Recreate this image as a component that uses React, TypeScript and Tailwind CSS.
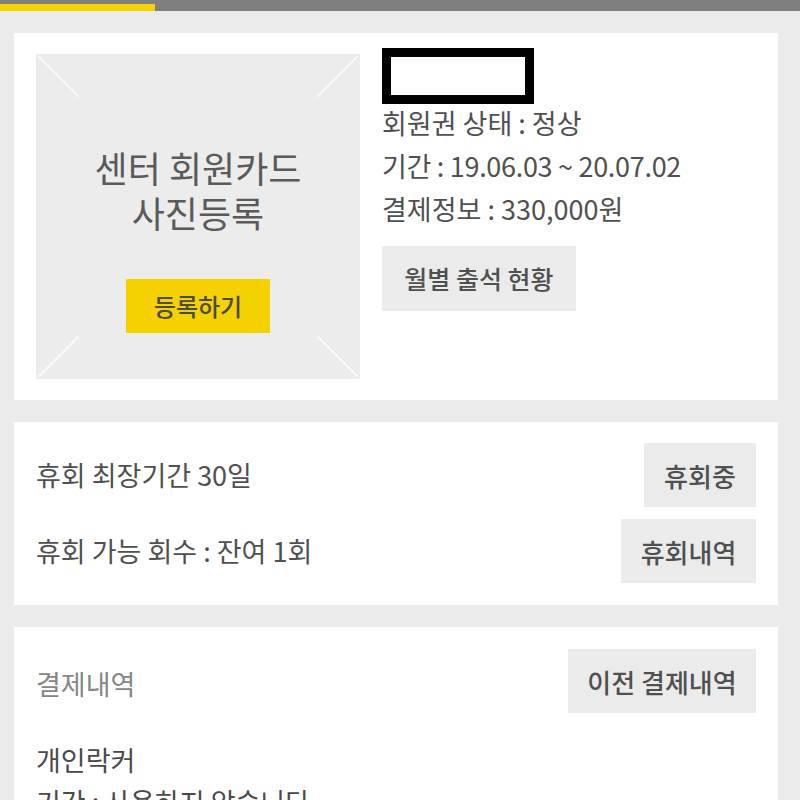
import React from 'react';

const GrayButton: React.FC<{ label: string; className?: string }> = ({ label, className = '' }) => (
  <button
    className={`h-[64px] bg-[#ebebeb] text-[#505050] text-[26px] font-medium flex items-center justify-center ${className}`}
  >
    {label}
  </button>
);

const PhotoPlaceholder: React.FC = () => (
  <div className="relative mt-[6px] w-[324px] h-[325px] bg-[#ececec] shrink-0 flex flex-col items-center">
    <svg className="absolute inset-0" width="324" height="325" viewBox="0 0 324 325">
      <g stroke="#ffffff" strokeWidth="2" strokeLinecap="round" opacity="0.8">
        <line x1="3" y1="3" x2="42" y2="42" />
        <line x1="321" y1="3" x2="282" y2="42" />
        <line x1="3" y1="322" x2="42" y2="283" />
        <line x1="321" y1="322" x2="282" y2="283" />
      </g>
    </svg>
    <div className="relative mt-[91px] text-center text-[36px] leading-[45px] text-[#5a5a5a]">
      <p>센터 회원카드</p>
      <p>사진등록</p>
    </div>
    <button className="relative mt-[44px] w-[144px] h-[54px] bg-[#f5d100] text-[24px] text-[#4a4a4a] font-medium">
      등록하기
    </button>
  </div>
);

export default function App() {
  return (
    <div className="min-h-screen bg-[#ebebeb] font-['Noto_Sans_CJK_KR','Noto_Sans',sans-serif] text-[#505050]">
      {/* tab indicator */}
      <div className="h-[11px] bg-[#7f7f7f] flex items-end">
        <div className="h-[7px] w-[155px] bg-[#f6d200]" />
      </div>

      <div className="pl-[14px] pr-[22px] pt-[22px] flex flex-col gap-[22px]">
        {/* membership card */}
        <div className="bg-white pt-[15px] pb-[21px] px-[22px] flex items-start gap-[22px]">
          <PhotoPlaceholder />
          <div className="flex flex-col items-start">
            <div className="w-[152px] h-[56px] border-[9px] border-black bg-white" />
            <div className="-mt-[3px] text-[27px] leading-[43px]">
              <p>회원권 상태 : 정상</p>
              <p className="tracking-[-0.3px]">기간 : 19.06.03 ~ 20.07.02</p>
              <p>결제정보 : 330,000원</p>
            </div>
            <button className="mt-[16px] w-[194px] h-[65px] bg-[#ebebeb] text-[25px] font-medium text-[#505050]">
              월별 출석 현황
            </button>
          </div>
        </div>

        {/* pause info */}
        <div className="bg-white pt-[21px] pb-[22px] px-[22px] flex flex-col gap-[12px]">
          <div className="flex items-center justify-between">
            <span className="text-[27px]">휴회 최장기간 30일</span>
            <GrayButton label="휴회중" className="w-[112px]" />
          </div>
          <div className="flex items-center justify-between">
            <span className="text-[27px]">휴회 가능 회수 : 잔여 1회</span>
            <GrayButton label="휴회내역" className="w-[135px]" />
          </div>
        </div>

        {/* payment history */}
        <div className="bg-white pt-[22px] px-[22px] pb-[20px]">
          <div className="flex items-center justify-between">
            <span className="text-[27px] text-[#858585] mt-[6px]">결제내역</span>
            <GrayButton label="이전 결제내역" className="w-[188px] h-[63px]" />
          </div>
          <div className="mt-[26px] text-[27px] leading-[42px] text-[#4a4a4a]">
            <p>개인락커</p>
            <p>기간 : 사용하지 않습니다</p>
          </div>
        </div>
      </div>
    </div>
  );
}
